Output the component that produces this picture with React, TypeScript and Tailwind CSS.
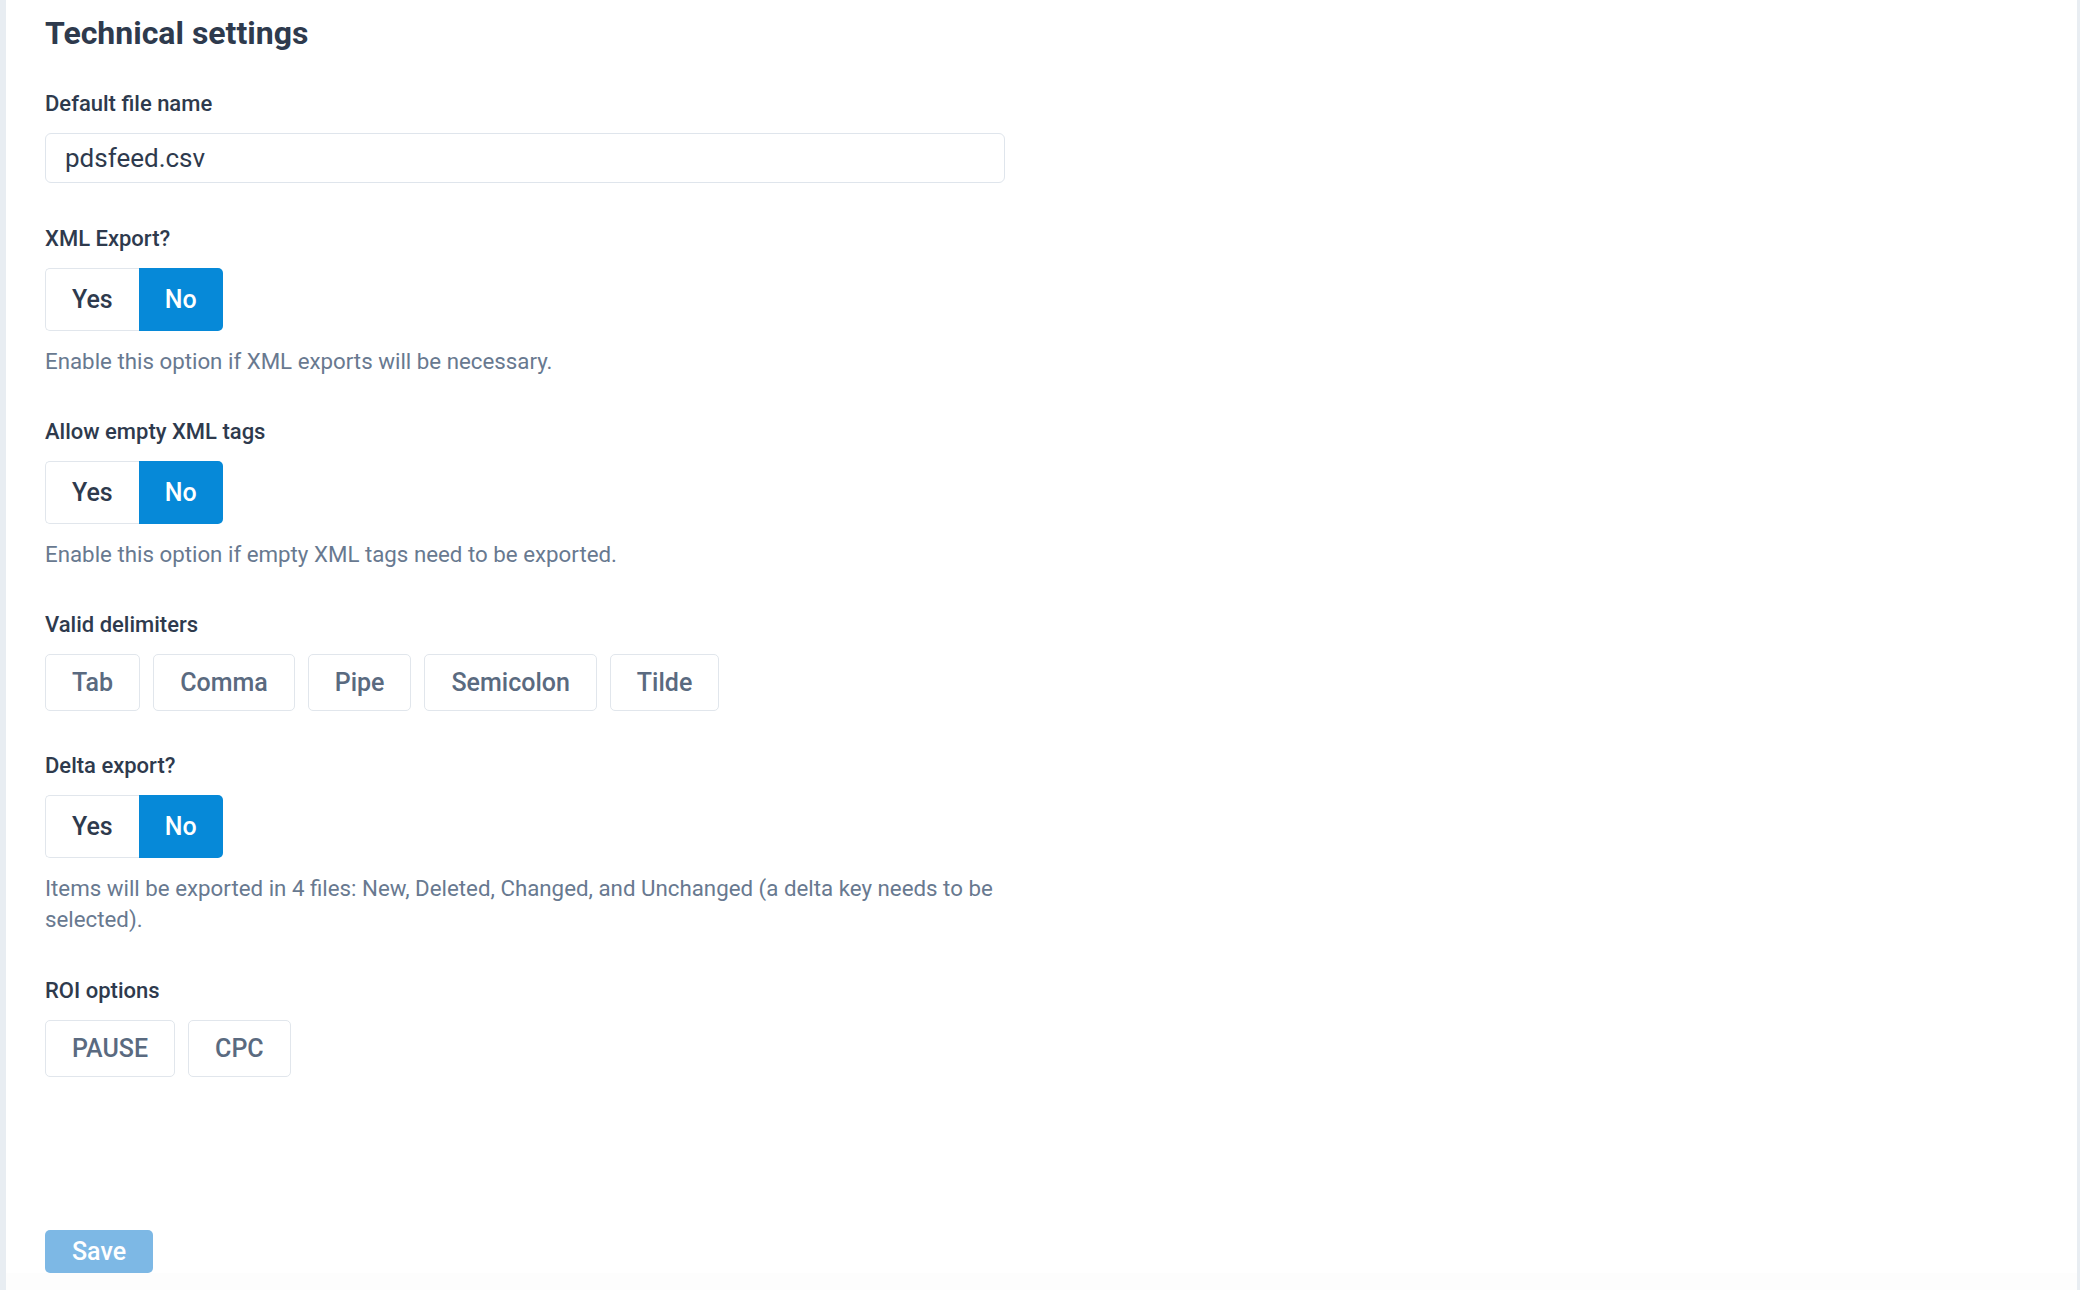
import React from "react";

const font = { fontFamily: "Roboto, 'Liberation Sans', sans-serif" };

function Label({ children }: { children: React.ReactNode }) {
  return (
    <div className="text-[22px] leading-[28px] font-medium text-[#2e3a4d]">{children}</div>
  );
}

function Help({ children }: { children: React.ReactNode }) {
  return (
    <p className="mt-[15px] text-[22.3px] leading-[30px] text-[#687990]">{children}</p>
  );
}

function YesNo() {
  return (
    <div className="mt-[15px] flex">
      <button className="h-[63px] px-[26px] border border-[#e1e6ec] border-r-0 rounded-l-[5px] bg-white text-[25px] font-medium text-[#2e3a4d]">
        Yes
      </button>
      <button className="h-[63px] px-[26px] rounded-r-[5px] bg-[#0689d8] text-[25px] font-medium text-white">
        No
      </button>
    </div>
  );
}

function Chips({ items }: { items: string[] }) {
  return (
    <div className="mt-[15px] flex gap-[13px]">
      {items.map((t) => (
        <button
          key={t}
          className="h-[57px] px-[26px] border border-[#e1e6ec] rounded-[5px] bg-white text-[25px] font-medium text-[#5a6a80]"
        >
          {t}
        </button>
      ))}
    </div>
  );
}

export default function App() {
  return (
    <div className="flex w-full h-[1290px] bg-white overflow-hidden" style={font}>
      <div className="w-[6px] shrink-0 bg-[#e8edf2]" />
      <div className="flex-1 flex flex-col">
        <div className="flex-1 pl-[39px] pt-[15px]">
          <div className="w-[965px]">
            <h1 className="text-[32px] leading-[36px] font-bold text-[#2e3a4d]">Technical settings</h1>

            <div className="mt-[39px]">
              <Label>Default file name</Label>
              <div className="mt-[15px] w-[960px] h-[50px] border border-[#dfe5ec] rounded-[6px] flex items-center px-[19px] text-[26px] text-[#2e3a4d]">
                pdsfeed.csv
              </div>
            </div>

            <div className="mt-[42px]">
              <Label>XML Export?</Label>
              <YesNo />
              <Help>Enable this option if XML exports will be necessary.</Help>
            </div>

            <div className="mt-[42px]">
              <Label>Allow empty XML tags</Label>
              <YesNo />
              <Help>Enable this option if empty XML tags need to be exported.</Help>
            </div>

            <div className="mt-[42px]">
              <Label>Valid delimiters</Label>
              <Chips items={["Tab", "Comma", "Pipe", "Semicolon", "Tilde"]} />
            </div>

            <div className="mt-[41px]">
              <Label>Delta export?</Label>
              <YesNo />
              <p className="mt-[15px] text-[22.3px] leading-[31px] text-[#687990]">
                Items will be exported in 4 files: New, Deleted, Changed, and Unchanged (a delta key needs to be selected).
              </p>
            </div>

            <div className="mt-[42px]">
              <Label>ROI options</Label>
              <Chips items={["PAUSE", "CPC"]} />
            </div>

            <button className="mt-[153px] h-[43px] w-[108px] rounded-[5px] bg-[#7db8e5] text-[25px] font-medium text-white">
              Save
            </button>
          </div>
        </div>
        <div className="h-[30px] bg-[#fdfdfd]" />
      </div>
      <div className="w-[3px] shrink-0 bg-[#e8edf2]" />
    </div>
  );
}
